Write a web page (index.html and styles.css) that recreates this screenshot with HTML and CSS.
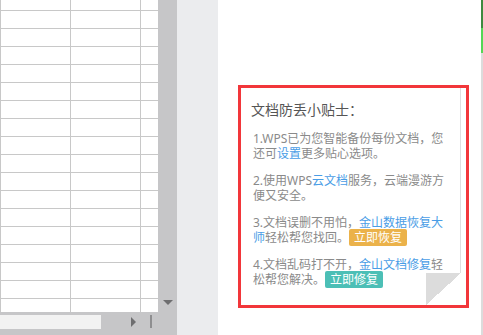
FILE: index.html
```html
<!DOCTYPE html>
<html lang="zh-CN">
  <head>
    <meta charset="UTF-8" />
    <meta name="viewport" content="width=device-width, initial-scale=1.0" />
    <title>文档防丢小贴士</title>
    <link rel="stylesheet" href="styles.css">
  </head>
  <body>
    <div class="sheet">
      <div class="sheet-main">
        <div class="grid"></div>
        <div class="vscroll">
          <span class="arrow-down"></span>
        </div>
      </div>
      <div class="hscroll">
        <div class="hscroll-thumb"></div>
        <span class="arrow-right"></span>
        <span class="hscroll-split"></span>
      </div>
    </div>

    <div class="gutter"></div>

    <div class="side">
      <div class="side-body">
        <div class="tip-frame">
          <div class="tip-note">
            <h2 class="tip-title">文档防丢小贴士：</h2>
            <p class="tip-item">1.WPS已为您智能备份每份文档，您还可<a class="link">设置</a>更多贴心选项。</p>
            <p class="tip-item">2.使用WPS<a class="link">云文档</a>服务，云端漫游方便又安全。</p>
            <p class="tip-item">3.文档误删不用怕，<a class="link">金山数据恢复大师</a>轻松帮您找回。<span class="btn btn-orange">立即恢复</span></p>
            <p class="tip-item">4.文档乱码打不开，<a class="link">金山文档修复</a>轻松帮您解决。<span class="btn btn-teal">立即修复</span></p>
          </div>
        </div>
      </div>
      <div class="side-track"></div>
    </div>
  </body>
</html>
```

FILE: styles.css
```css
body {
  margin: 0;
  height: 335px;
  display: flex;
  overflow: hidden;
  font-family: "Noto Sans", "Noto Sans CJK SC", sans-serif;
}

/* spreadsheet on the left */
.sheet {
  width: 177px;
  display: flex;
  flex-direction: column;
  background: #c6c6c8;
}

.sheet-main {
  display: flex;
  height: 312px;
}

.grid {
  width: 158px;
  background-color: #fff;
  background-image:
    linear-gradient(to bottom, #c8c8c8 1px, transparent 1px),
    linear-gradient(to right, #c8c8c8 1px, transparent 1px);
  background-size: 100% 18px, 70px 100%;
  background-position: 0 10px, 0 0;
}

.vscroll {
  width: 19px;
  display: flex;
  align-items: flex-end;
  justify-content: center;
}

.arrow-down {
  width: 0;
  height: 0;
  margin-bottom: 7px;
  border-left: 5px solid transparent;
  border-right: 5px solid transparent;
  border-top: 5px solid #6e6e70;
}

.hscroll {
  flex: 1;
  display: flex;
  align-items: center;
  padding-bottom: 4px;
}

.hscroll-thumb {
  width: 101px;
  height: 14px;
  background: #f2f2f2;
}

.arrow-right {
  width: 0;
  height: 0;
  margin-left: 30px;
  border-top: 5px solid transparent;
  border-bottom: 5px solid transparent;
  border-left: 5px solid #6e6e70;
}

.hscroll-split {
  width: 2px;
  height: 13px;
  margin-left: 14px;
  background: #8e8e90;
}

.gutter {
  width: 41px;
  background: #ebecee;
}

/* tips panel */
.side {
  flex: 1;
  display: flex;
  background: #fff;
}

.side-body {
  flex: 1;
  padding: 85px 0 0 20px;
}

.side-track {
  width: 2px;
  background: linear-gradient(to bottom, #3f8a3f 0, #3f8a3f 28px, #55d655 28px, #55d655 53px, #dcdcdc 53px);
}

.tip-frame {
  width: 225px;
  height: 217px;
  border: 3px solid #f2363a;
}

.tip-note {
  position: relative;
  width: 209px;
  height: 204px;
  padding: 13px 0 0 10px;
  border-right: 1px solid #dedede;
}

.tip-note::after {
  content: "";
  position: absolute;
  right: -1px;
  bottom: 0;
  width: 35px;
  height: 32px;
  background: linear-gradient(to bottom right, #dcdcdc 50%, #fff 50%);
}

.tip-title {
  margin: 0 0 12px;
  font-size: 14px;
  font-weight: normal;
  line-height: 18px;
  color: #555;
}

.tip-item {
  width: 198px;
  margin: 0 0 12px 2px;
  font-size: 12px;
  line-height: 15px;
  color: #8a8a8a;
}

.link {
  color: #4a9de6;
}

.btn {
  padding: 0 5px;
  border-radius: 2px;
  color: #fff;
}

.btn-orange {
  background: #ebb24a;
}

.btn-teal {
  background: #4cbfb6;
}
```
